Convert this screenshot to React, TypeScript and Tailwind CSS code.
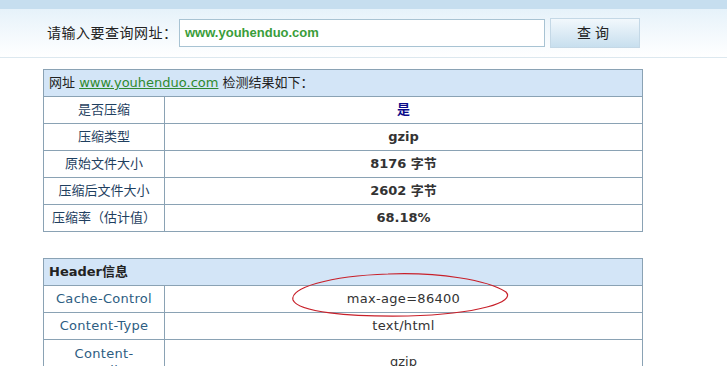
import React from 'react';

const cjk = '"DejaVu Sans", Verdana, "Noto Sans CJK SC", sans-serif';

const summary = [
  { k: '是否压缩', v: '是', navy: true },
  { k: '压缩类型', v: 'gzip' },
  { k: '原始文件大小', v: '8176 字节' },
  { k: '压缩后文件大小', v: '2602 字节' },
  { k: '压缩率（估计值）', v: '68.18%' },
];

function Row({ k, v, navy }: { k: string; v: string; navy?: boolean }) {
  return (
    <tr className="h-[27px]">
      <td className="w-[121px] border border-[#8aa2b4] text-center text-[13px] text-[#1f3f5f] p-0">{k}</td>
      <td
        className={`border border-[#8aa2b4] text-center text-[13px] font-bold p-0 ${
          navy ? 'text-[#0a0a8a]' : 'text-[#333]'
        }`}
      >
        {v}
      </td>
    </tr>
  );
}

export default function App() {
  return (
    <div className="relative w-[727px] h-[366px] overflow-hidden bg-white" style={{ fontFamily: cjk }}>
      {/* top band */}
      <div className="h-[9px] bg-[#c6deef]" />
      <div className="h-[49px] bg-gradient-to-b from-[#e6f2fa] to-[#ffffff] border-b border-[#dce8ef] flex items-center">
        <span className="ml-[47px] w-[132px] text-[14px] text-[#222] tracking-[0.5px]">请输入要查询网址：</span>
        <div className="w-[366px] h-[28px] border border-[#a8c3d3] bg-white flex items-center px-[5px]">
          <span
            className="text-[13px] font-bold text-[#3a9d3a]"
            style={{ fontFamily: '"Liberation Sans", Arial, sans-serif' }}
          >
            www.youhenduo.com
          </span>
        </div>
        <button className="ml-[5px] w-[90px] h-[30px] border border-[#c4d8e6] bg-gradient-to-b from-[#f2f8fc] to-[#c8dfee] text-[14px] text-[#222] tracking-[4px]">
          查询
        </button>
      </div>

      <div className="pl-[43px] pt-[11px]">
        <table className="w-[600px] border-collapse">
          <tbody>
            <tr className="h-[27px] bg-[#d3e5f7]">
              <td colSpan={2} className="border border-[#8aa2b4] px-[5px] text-[13px] text-[#222] p-0">
                网址 <span className="text-[#2f8a2f] underline">www.youhenduo.com</span> 检测结果如下：
              </td>
            </tr>
            {summary.map((r) => (
              <Row key={r.k} {...r} />
            ))}
          </tbody>
        </table>

        <table className="mt-[26px] w-[600px] border-collapse">
          <tbody>
            <tr className="h-[27px] bg-[#d3e5f7]">
              <td colSpan={2} className="border border-[#8aa2b4] px-[5px] text-[13px] font-bold text-[#222]">
                Header信息
              </td>
            </tr>
            <tr className="h-[27px]">
              <td className="w-[121px] border border-[#8aa2b4] text-center text-[13px] tracking-[0.3px] text-[#2d5d82]">Cache-Control</td>
              <td className="border border-[#8aa2b4] text-center text-[13px] tracking-[0.3px] text-[#333]">max-age=86400</td>
            </tr>
            <tr className="h-[27px]">
              <td className="w-[121px] border border-[#8aa2b4] text-center text-[13px] tracking-[0.3px] text-[#2d5d82]">Content-Type</td>
              <td className="border border-[#8aa2b4] text-center text-[13px] tracking-[0.3px] text-[#333]">text/html</td>
            </tr>
            <tr>
              <td className="w-[121px] border border-[#8aa2b4] text-center text-[13px] leading-[17px] py-[5px] tracking-[0.3px] text-[#2d5d82]">
                Content-
                <br />
                Encoding
              </td>
              <td className="border border-[#8aa2b4] text-center text-[13px] text-[#333]">gzip</td>
            </tr>
          </tbody>
        </table>
      </div>

      {/* hand-drawn red ellipse */}
      <svg className="absolute left-[288px] top-[270px]" width="226" height="50" viewBox="0 0 226 50">
        <path
          d="M100 4 C150 2 200 10 218 22 C228 32 190 44 120 46 C60 47 10 42 5 30 C2 18 40 6 100 4"
          fill="none"
          stroke="#c8202a"
          strokeWidth="1.2"
        />
      </svg>
    </div>
  );
}
